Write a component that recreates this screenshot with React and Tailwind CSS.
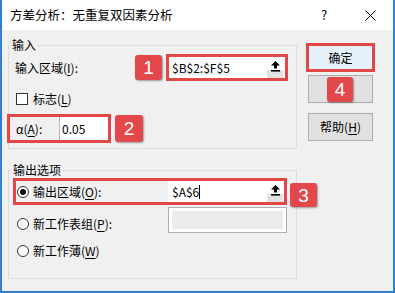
import React from 'react';

function Badge({ n, className = '' }) {
  return (
    <div
      className={`flex items-center justify-center bg-[#e2474a] text-white font-['Liberation_Sans',sans-serif] text-[19px] leading-none rounded-[3px] shadow-[1px_1px_2px_rgba(0,0,0,0.35)] ${className}`}
    >
      {n}
    </div>
  );
}

function PickButton() {
  return (
    <div className="w-[16px] self-stretch flex justify-center pt-[4px] bg-[linear-gradient(#ffffff_60%,#e2e2e2_60%)]">
      <svg width="9" height="11" viewBox="0 0 9 11">
        <path d="M4.5 0 L9 4.5 H6 V7.5 H3 V4.5 H0 Z" fill="#000" />
        <rect x="0" y="9" width="9" height="1.6" fill="#000" />
      </svg>
    </div>
  );
}

function Radio({ checked }) {
  return (
    <div className="w-[12px] h-[12px] rounded-full border border-[#333] bg-white flex items-center justify-center shrink-0">
      {checked && <div className="w-[6px] h-[6px] rounded-full bg-[#111]" />}
    </div>
  );
}

const U = ({ children }) => <span className="underline underline-offset-2">{children}</span>;

export default function App() {
  return (
    <div className="w-[395px] h-[293px] bg-[#f0f0f0] border-x-2 border-b-2 border-[#2e7fd2] flex flex-col overflow-hidden font-['Noto_Sans_CJK_SC',sans-serif] text-[12px] leading-[16px] text-black">
      {/* title bar */}
      <div className="h-[30px] bg-white flex items-center pl-[8px] shrink-0">
        <span className="text-[12.5px]">方差分析：无重复双因素分析</span>
        <div className="flex-1" />
        <div className="w-[46px] h-full flex items-center justify-center text-[13px]">?</div>
        <div className="w-[46px] h-full flex items-center justify-center">
          <svg width="11" height="11" viewBox="0 0 11 11">
            <path d="M0.5 0.5 L10.5 10.5 M10.5 0.5 L0.5 10.5" stroke="#000" strokeWidth="1" />
          </svg>
        </div>
      </div>

      <div className="flex pl-[6px]">
        {/* left column */}
        <div className="w-[289px] flex flex-col">
          <fieldset className="mt-[7px] border border-[#dcdcdc] pb-[5px]">
            <legend className="ml-[2px] px-[1px]">输入</legend>
            <div className="mt-[1px] h-[27px] flex items-center">
              <span className="w-[126px] pl-[6px]">
                输入区域(<U>I</U>):
              </span>
              <Badge n="1" className="w-[27px] h-[25px]" />
              <div className="ml-[4px] w-[122px] h-[27px] border-[3px] border-[#e04848] bg-white flex">
                <span className="flex-1 pl-[3px] self-center">$B$2:$F$5</span>
                <PickButton />
                <div className="w-[2px]" />
              </div>
            </div>
            <div className="mt-[10px] h-[16px] flex items-center pl-[7px]">
              <div className="w-[12px] h-[12px] border border-[#333] bg-white" />
              <span className="ml-[5px]">
                标志(<U>L</U>)
              </span>
            </div>
            <div className="mt-[7px] h-[29px] flex -ml-[2px]">
              <div className="w-[104px] h-[29px] border-[3px] border-[#e04848] flex">
                <span className="w-[49px] pl-[6px] self-center">
                  α(<U>A</U>):
                </span>
                <span className="flex-1 bg-white border-l border-[#b5b5b5] pl-[2px] flex items-center">0.05</span>
              </div>
              <Badge n="2" className="ml-[4px] w-[28px] h-[27px] self-center" />
            </div>
          </fieldset>

          <fieldset className="mt-[13px] border border-[#dcdcdc] pb-[19px]">
            <legend className="ml-[3px] px-[1px]">输出选项</legend>
            <div className="relative h-[27px]">
              <div className="ml-[4px] w-[274px] h-[27px] border-[3px] border-[#e04848] flex">
                <div className="flex items-center pl-[1px]">
                  <Radio checked />
                  <span className="ml-[4px]">
                    输出区域(<U>O</U>):
                  </span>
                </div>
                <div className="ml-auto w-[116px] bg-white flex">
                  <span className="flex-1 pl-[4px] self-center flex items-center">
                    $A$6<span className="inline-block w-px h-[14px] bg-black" />
                  </span>
                  <PickButton />
                  <div className="w-[1px]" />
                </div>
              </div>
              <Badge n="3" className="absolute left-[281px] top-[5px] w-[27px] h-[24px]" />
            </div>
            <div className="mt-[1px] h-[28px] flex items-start">
              <div className="w-[159px] pl-[8px] mt-[10px] h-[16px] flex items-center">
                <Radio />
                <span className="ml-[4px]">
                  新工作表组(<U>P</U>):
                </span>
              </div>
              <div className="mt-[1px] w-[119px] h-[26px] border border-[#adadad] bg-white p-[3px]">
                <div className="w-full h-full bg-[#ececec]" />
              </div>
            </div>
            <div className="mt-[9px] h-[16px] flex items-center pl-[8px]">
              <Radio />
              <span className="ml-[4px]">
                新工作薄(<U>W</U>)
              </span>
            </div>
          </fieldset>
        </div>

        {/* right column */}
        <div className="ml-[11px] w-[65px] pt-[13px] flex flex-col">
          <div className="-mx-[2px] h-[29px] border-[3px] border-[#e04848] bg-[#e5f1fb] flex items-center justify-center">
            确定
          </div>
          <div className="relative mt-[3px] h-[28px] border border-[#adadad] bg-[#e1e1e1]">
            <Badge n="4" className="absolute left-[18px] top-[1px] w-[26px] h-[25px]" />
          </div>
          <div className="mt-[10px] h-[28px] border border-[#adadad] bg-[#e1e1e1] flex items-center justify-center">
            帮助(<U>H</U>)
          </div>
        </div>
      </div>
    </div>
  );
}
